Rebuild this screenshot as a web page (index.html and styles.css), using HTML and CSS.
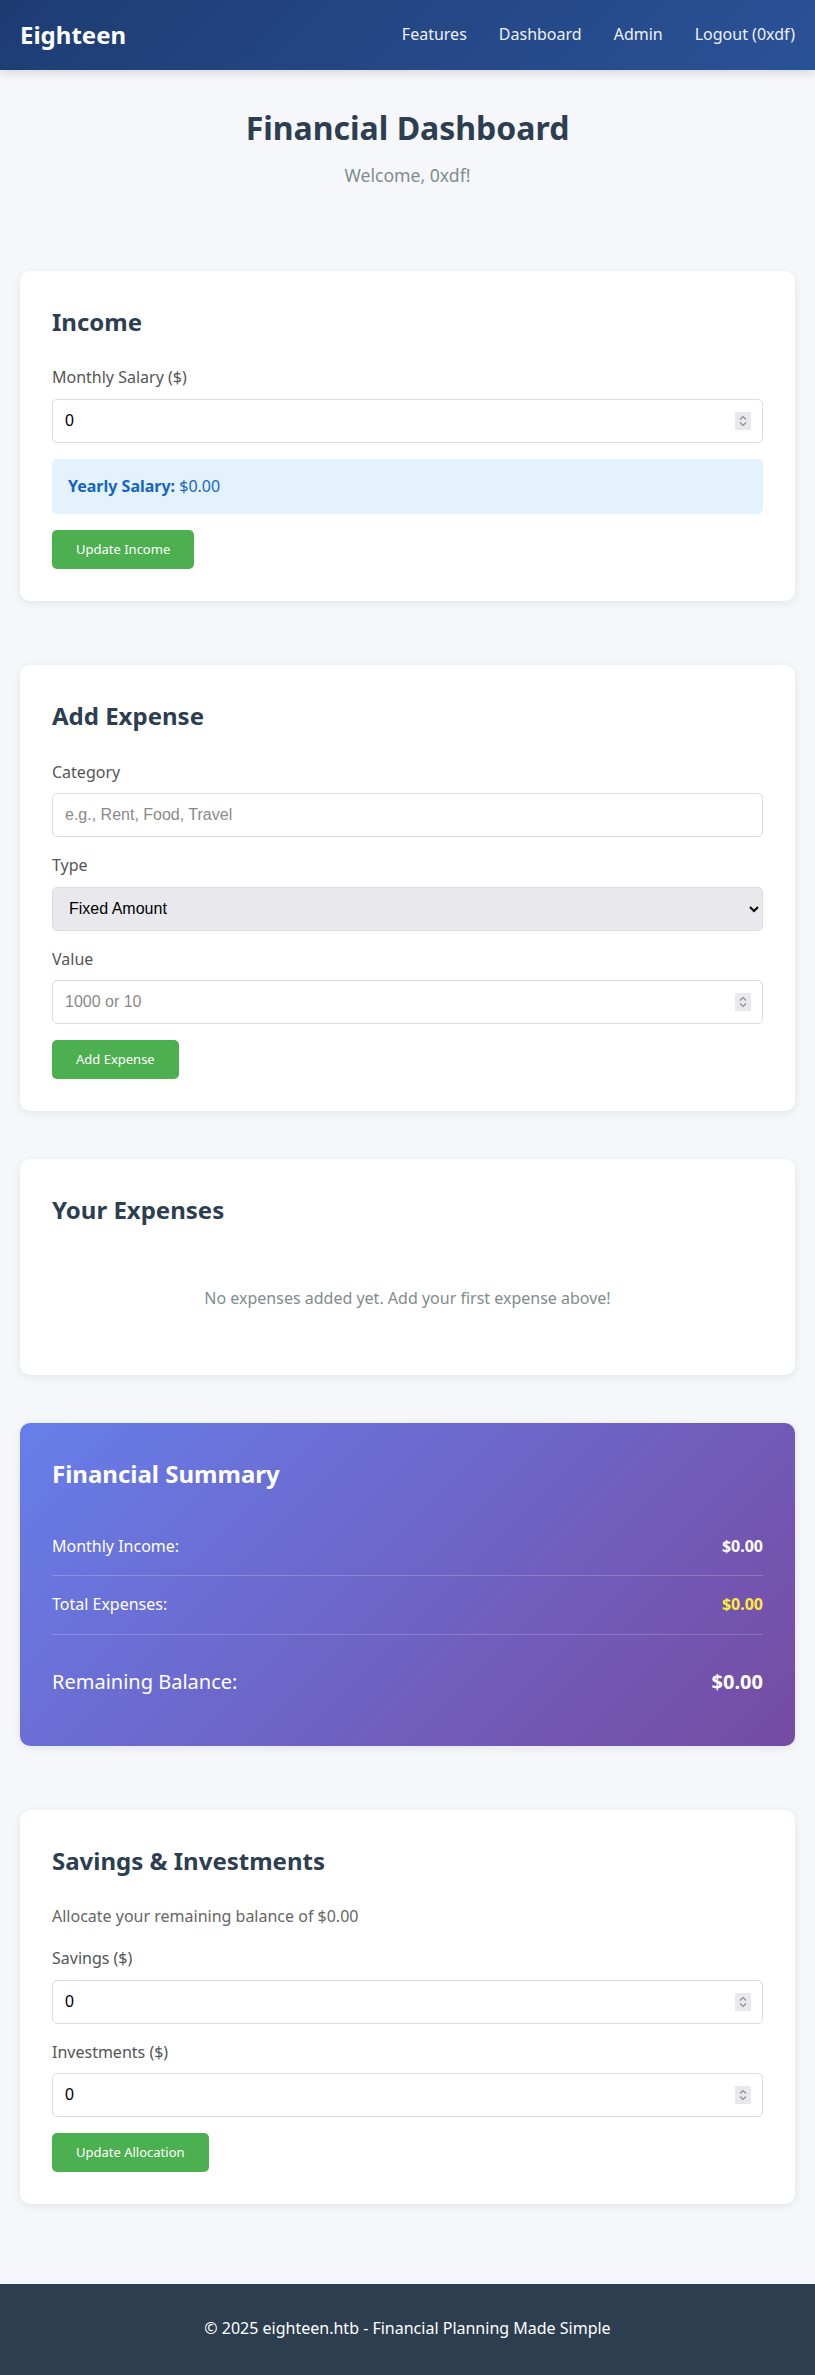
FILE: index.html
```html
<!DOCTYPE html>
<html lang="en">
<head>
<meta charset="utf-8">
<title>Eighteen - Financial Dashboard</title>
<link rel="stylesheet" href="styles.css">
</head>
<body>
<header class="topbar">
  <div class="logo">Eighteen</div>
  <nav class="nav">
    <a href="#">Features</a>
    <a href="#">Dashboard</a>
    <a href="#">Admin</a>
    <a href="#">Logout (0xdf)</a>
  </nav>
</header>

<main class="main">
  <div class="intro">
    <h1>Financial Dashboard</h1>
    <p>Welcome, 0xdf!</p>
  </div>

  <section class="card card-income">
    <h2>Income</h2>
    <div class="form-group">
      <label>Monthly Salary ($)</label>
      <div class="num-wrap">
        <input class="field" type="number" value="0">
        <span class="spin"><svg viewBox="0 0 16 18" width="16" height="18"><polyline points="5,7.5 8,4.5 11,7.5"/><polyline points="5,10.5 8,13.5 11,10.5"/></svg></span>
      </div>
    </div>
    <div class="info-box"><strong>Yearly Salary:</strong> $0.00</div>
    <button class="btn">Update Income</button>
  </section>

  <section class="card card-expense">
    <h2>Add Expense</h2>
    <div class="form-group">
      <label>Category</label>
      <input class="field" type="text" placeholder="e.g., Rent, Food, Travel">
    </div>
    <div class="form-group">
      <label>Type</label>
      <select class="field select">
        <option>Fixed Amount</option>
        <option>Percentage</option>
      </select>
    </div>
    <div class="form-group">
      <label>Value</label>
      <div class="num-wrap">
        <input class="field" type="number" placeholder="1000 or 10">
        <span class="spin"><svg viewBox="0 0 16 18" width="16" height="18"><polyline points="5,7.5 8,4.5 11,7.5"/><polyline points="5,10.5 8,13.5 11,10.5"/></svg></span>
      </div>
    </div>
    <button class="btn">Add Expense</button>
  </section>

  <section class="card card-list">
    <h2>Your Expenses</h2>
    <p class="empty">No expenses added yet. Add your first expense above!</p>
  </section>

  <section class="card summary">
    <h2>Financial Summary</h2>
    <div class="sum-row"><span>Monthly Income:</span><strong>$0.00</strong></div>
    <div class="sum-row"><span>Total Expenses:</span><strong class="yellow">$0.00</strong></div>
    <div class="sum-row total"><span>Remaining Balance:</span><strong>$0.00</strong></div>
  </section>

  <section class="card savings">
    <h2>Savings &amp; Investments</h2>
    <p class="note">Allocate your remaining balance of $0.00</p>
    <div class="form-group">
      <label>Savings ($)</label>
      <div class="num-wrap">
        <input class="field" type="number" value="0">
        <span class="spin"><svg viewBox="0 0 16 18" width="16" height="18"><polyline points="5,7.5 8,4.5 11,7.5"/><polyline points="5,10.5 8,13.5 11,10.5"/></svg></span>
      </div>
    </div>
    <div class="form-group">
      <label>Investments ($)</label>
      <div class="num-wrap">
        <input class="field" type="number" value="0">
        <span class="spin"><svg viewBox="0 0 16 18" width="16" height="18"><polyline points="5,7.5 8,4.5 11,7.5"/><polyline points="5,10.5 8,13.5 11,10.5"/></svg></span>
      </div>
    </div>
    <button class="btn">Update Allocation</button>
  </section>
</main>

<footer class="footer">
  <p>&copy; 2025 eighteen.htb - Financial Planning Made Simple</p>
</footer>
</body>
</html>
```

FILE: styles.css
```css
* { box-sizing: border-box; }

html, body { margin: 0; padding: 0; }

body {
  font-family: "Noto Sans", "Open Sans", sans-serif;
  background: #f5f7fa;
  color: #333;
  line-height: 1.6;
  font-size: 16px;
  min-height: 100vh;
  display: flex;
  flex-direction: column;
}

.topbar {
  background: linear-gradient(135deg, #1e3c72 0%, #2a5298 100%);
  padding: 16px 20px;
  display: flex;
  justify-content: space-between;
  align-items: center;
  box-shadow: 0 2px 10px rgba(0, 0, 0, 0.15);
  position: relative;
  z-index: 1;
}

.logo {
  color: #fff;
  font-size: 24px;
  font-weight: 700;
}

.nav {
  display: flex;
  gap: 32px;
}

.nav a {
  color: #eef1f7;
  text-decoration: none;
  font-size: 16px;
}

.main {
  padding: 32px 20px 80px;
}

.intro {
  text-align: center;
  margin-bottom: 82px;
}

.intro h1 {
  margin: 0 0 7px;
  font-size: 32px;
  color: #2c3e50;
  font-weight: 700;
}

.intro p {
  margin: 0;
  font-size: 17.6px;
  color: #7f8c8d;
}

.card {
  background: #fff;
  border-radius: 10px;
  padding: 32px;
  box-shadow: 0 2px 10px rgba(0, 0, 0, 0.08);
}

.card h2 {
  margin: 0 0 24px;
  font-size: 24px;
  color: #2c3e50;
  font-weight: 700;
}

.card-income { margin-bottom: 64px; }
.card-expense { margin-bottom: 48px; }
.card-list { margin-bottom: 48px; }
.summary { margin-bottom: 64px; }

.form-group { margin-bottom: 16px; }

.form-group label {
  display: block;
  margin-bottom: 8px;
  color: #555;
  font-size: 16px;
}

.field {
  display: block;
  width: 100%;
  padding: 12px;
  border: 1px solid #dcdcdc;
  border-radius: 5px;
  font-family: "Liberation Sans", Arial, sans-serif;
  font-size: 16px;
  color: #000;
  background: #fff;
  line-height: normal;
}

.field::placeholder { color: #8a8a8a; }

.field::-webkit-inner-spin-button,
.field::-webkit-outer-spin-button {
  -webkit-appearance: none;
  margin: 0;
}

.num-wrap {
  position: relative;
}

.spin {
  position: absolute;
  right: 12px;
  top: 50%;
  transform: translateY(-50%);
  width: 16px;
  height: 18px;
  background: #e9e9ed;
  border-radius: 1px;
  display: flex;
}

.spin svg {
  fill: none;
  stroke: #8c8c94;
  stroke-width: 1.1;
}

.select {
  height: 44px;
  padding: 0 12px;
  background-color: #e9e9ed;
}

.info-box {
  background: #e3f2fd;
  color: #1565c0;
  padding: 15px 16px;
  border-radius: 5px;
  margin-bottom: 16px;
}

.info-box strong { font-weight: 700; }

.btn {
  display: inline-block;
  background: #4caf50;
  color: #fff;
  border: none;
  border-radius: 5px;
  padding: 10px 24px;
  font-family: "Noto Sans", sans-serif;
  font-size: 13px;
  line-height: 19px;
  cursor: pointer;
}

.empty {
  text-align: center;
  color: #7f8c8d;
  margin: 0;
  padding: 32px 0;
}

.summary {
  background: linear-gradient(135deg, #667eea 0%, #764ba2 100%);
  color: #fff;
}

.summary h2 { color: #fff; }

.sum-row {
  display: flex;
  justify-content: space-between;
  padding: 16px 0;
  border-bottom: 1px solid rgba(255, 255, 255, 0.2);
}

.sum-row strong { font-weight: 700; }

.sum-row .yellow { color: #ffeb3b; }

.sum-row.total {
  border-bottom: none;
  margin-top: 15px;
  font-size: 20px;
}

.note {
  margin: 0 0 16px;
  color: #666;
}

.footer {
  flex-grow: 1;
  background: #2c3e50;
  color: #fff;
  text-align: center;
  padding: 32px 20px;
}

.footer p { margin: 0; }
```
